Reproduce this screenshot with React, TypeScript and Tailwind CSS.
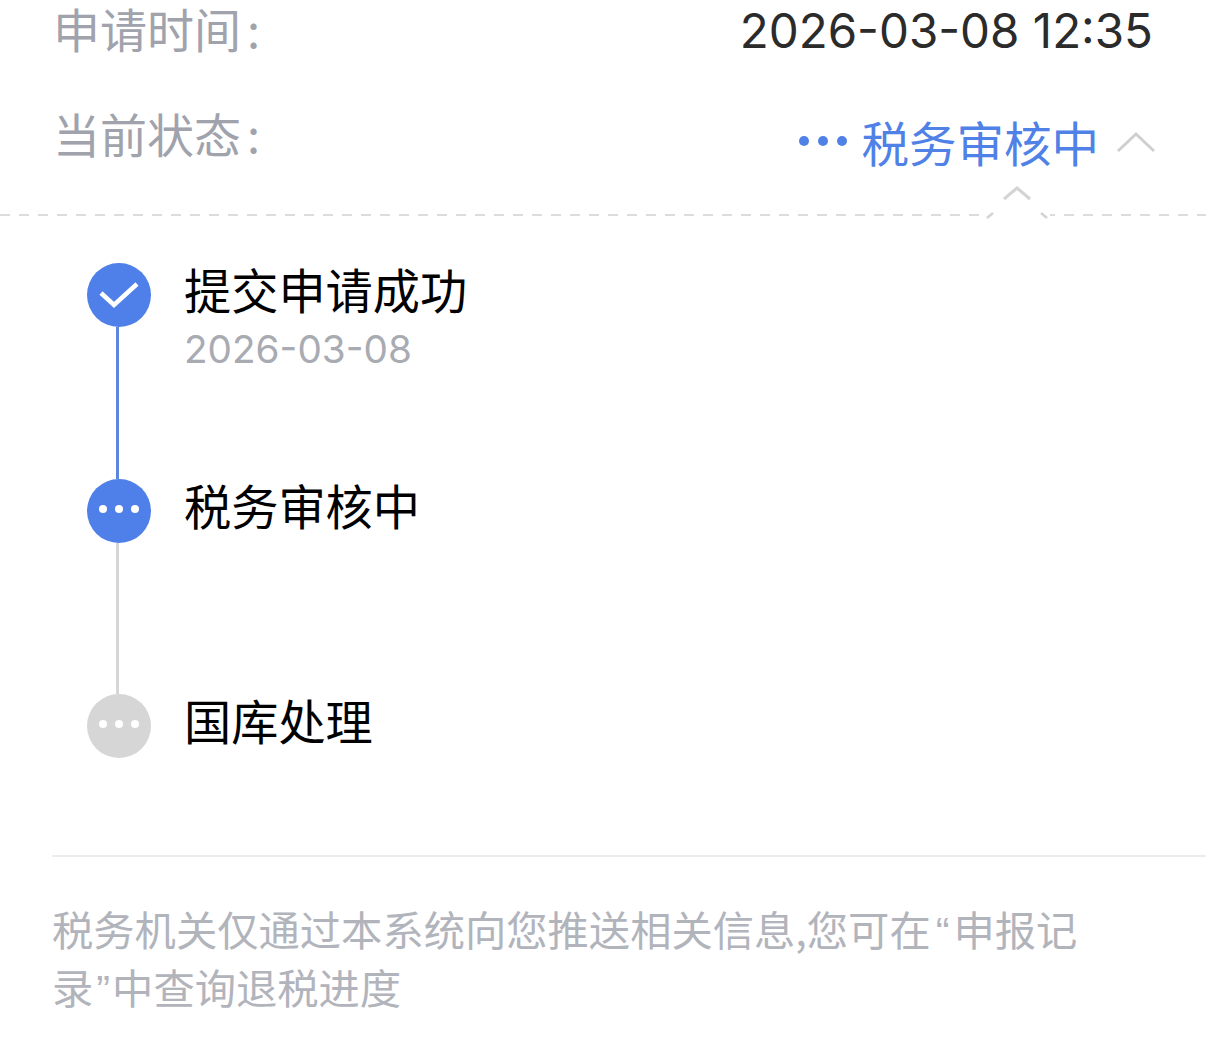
function Dots({ className }: { className: string }) {
  return (
    <div className="flex gap-[8px] mb-[4px]">
      <span className={`w-[8px] h-[8px] rounded-full ${className}`} />
      <span className={`w-[8px] h-[8px] rounded-full ${className}`} />
      <span className={`w-[8px] h-[8px] rounded-full ${className}`} />
    </div>
  );
}

export default function App() {
  return (
    <div className="w-[1206px] h-[1039px] bg-white overflow-hidden font-['Noto_Sans_CJK_SC',sans-serif]">
      {/* Top rows */}
      <div className="flex justify-between h-[62px] pl-[53px] pr-[53px]">
        <span className="text-[47px] leading-[56px] text-[#a0a2ac]">申请时间<span className="ml-[6px]">:</span></span>
        <span className="text-[47.5px] leading-[62px] text-[#2b2b2b] font-['Inter',sans-serif]">2026-03-08 12:35</span>
      </div>
      <div className="flex justify-between h-[62px] mt-[44px] pl-[53px] pr-[50px]">
        <span className="text-[47px] leading-[54px] text-[#a0a2ac]">当前状态<span className="ml-[6px]">:</span></span>
        <div className="flex items-center mt-[10px]">
          <div className="flex gap-[9px] mr-[15px] mb-[2px]">
            <span className="w-[10px] h-[10px] rounded-full bg-[#4f81e6]" />
            <span className="w-[10px] h-[10px] rounded-full bg-[#4f81e6]" />
            <span className="w-[10px] h-[10px] rounded-full bg-[#4f81e6]" />
          </div>
          <span className="text-[47.5px] leading-[60px] text-[#4f81e6]">税务审核中</span>
          <svg width="40" height="24" viewBox="0 0 40 24" className="ml-[17px]" fill="none">
            <path d="M2 21 L20 4 L38 21" stroke="#cfcfcf" strokeWidth="3" />
          </svg>
        </div>
      </div>

      {/* Dashed divider with notch */}
      <div className="relative mt-[46px] h-[2px] bg-[repeating-linear-gradient(90deg,#dcdcdc_0_10px,transparent_10px_19px)]">
        <div className="absolute left-[984px] top-[-29px] w-[66px] h-[34px] bg-white">
          <svg width="66" height="34" viewBox="0 0 66 34" fill="none">
            <path d="M20 14 L33 3 L46 14" stroke="#d4d4d4" strokeWidth="3" />
            <path d="M3 33 L9 28" stroke="#d4d4d4" strokeWidth="2.5" />
            <path d="M57 28 L63 33" stroke="#d4d4d4" strokeWidth="2.5" />
          </svg>
        </div>
      </div>

      {/* Timeline */}
      <div className="pl-[87px] mt-[47px]">
        <div className="flex gap-[33px] h-[216px]">
          <div className="flex flex-col w-[64px]">
            <div className="w-[64px] h-[64px] shrink-0 rounded-full bg-[#4f7fe8] flex items-center justify-center">
              <svg width="40" height="28" viewBox="0 0 40 28" fill="none">
                <path d="M2 12 L15 24 L38 3" stroke="white" strokeWidth="4.5" />
              </svg>
            </div>
            <div className="w-[3px] ml-[29px] flex-1 bg-[#5c87dc]" />
          </div>
          <div>
            <div className="text-[47.2px] leading-[52px] text-black">提交申请成功</div>
            <div className="text-[38.7px] leading-[50px] text-[#a9abb3] font-['Inter',sans-serif] mt-[9px]">2026-03-08</div>
          </div>
        </div>
        <div className="flex gap-[33px] h-[215px]">
          <div className="flex flex-col w-[64px]">
            <div className="w-[64px] h-[64px] shrink-0 rounded-full bg-[#4f7fe8] flex items-center justify-center">
              <Dots className="bg-white" />
            </div>
            <div className="w-[3px] ml-[29px] flex-1 bg-[#d6d6d6]" />
          </div>
          <div className="text-[47.2px] leading-[52px] text-black">税务审核中</div>
        </div>
        <div className="flex gap-[33px]">
          <div className="w-[64px] h-[64px] shrink-0 rounded-full bg-[#d6d6d6] flex items-center justify-center">
            <Dots className="bg-white" />
          </div>
          <div className="text-[47.2px] leading-[52px] text-black">国库处理</div>
        </div>
      </div>

      {/* Footer note */}
      <div className="ml-[52px] mt-[97px] border-t-2 border-[#ececec] pt-[42px] pr-[90px]">
        <p className="text-[41.3px] leading-[58px] text-[#b2b4bc]">
          税务机关仅通过本系统向您推送相关信息,您可在<span className="font-['Liberation_Sans'] leading-none ml-[5px] mr-[4px]">“</span>申报记录<span className="font-['Liberation_Sans'] leading-none ml-[3px] mr-[2px]">”</span>中查询退税进度
        </p>
      </div>
    </div>
  );
}
